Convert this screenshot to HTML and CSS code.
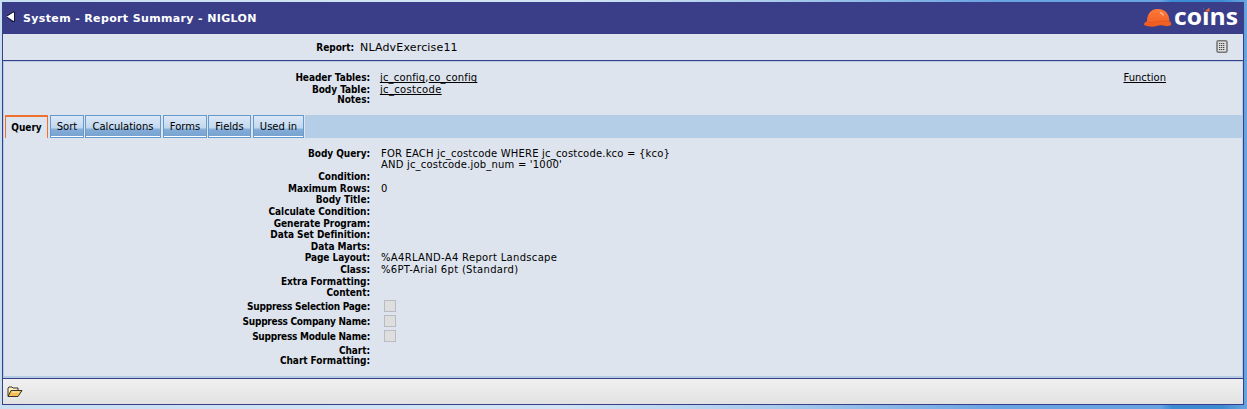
FILE: index.html
```html
<!DOCTYPE html>
<html lang="en">
<head>
<meta charset="utf-8">
<title>System - Report Summary - NIGLON</title>
<link rel="stylesheet" href="styles.css">
</head>
<body>
<div class="window">
  <header class="titlebar">
    <svg class="back" width="11" height="12" viewBox="0 0 11 12"><path d="M.5 5.500 8 1v9z" fill="#fff"/><path d="M1 5 7 1h1.500v9.500H6L1 6" fill="none" stroke="#151530"/></svg>
    <h1>System - Report Summary - NIGLON</h1>
    <svg class="logo" width="98" height="30" viewBox="0 0 98 30">
      <defs><linearGradient id="hat" x1="0" y1="0" x2="0" y2="1"><stop offset="0" stop-color="#ff7a3c"/><stop offset="1" stop-color="#ee5a1e"/></linearGradient></defs>
      <path d="M1 22c0-2 1-3 3-3.500C4 11 8 6 14 6c8-.5 12.500 5 12.500 12.500 1.500.5 2 1.500 1.500 3.500-2 1.500-5 1.500-8 .5-4-1-7 1-11 1.200C6 23.500 4 23 1 22z" fill="url(#hat)"/>
      <path d="M17 9.500c2 .5 3 1.500 3.500 3" fill="none" stroke="#ffb68c" stroke-width="1.600"/>
      <path d="M4 19.500c6 1 13-2.500 22-1" fill="none" stroke="#e2531a" stroke-width=".8"/>
      <text class="brand" x="31" y="22" textLength="64" lengthAdjust="spacingAndGlyphs">coins</text>
      <path d="M60.500 2h6.500v6.500h-6.500z" fill="#3a3e88"/><path d="M61.500 8.500 66.500 4.500v4z" fill="#f26a2d"/>
    </svg>
  </header>
  <section class="report">
    <span class="label">Report:</span><span class="report-name">NLAdvExercise11</span>
    <svg class="sheet" width="12" height="13" viewBox="0 0 12 13"><rect x="1" y=".8" width="10" height="11.400" rx="1.500" fill="#ddd" stroke="#777" stroke-width="1.600"/><path d="M3 3.500h6M3 5.500h6M3 7.500h6M3 9.500h6" stroke="#444" stroke-dasharray="1.300 .7"/></svg>
  </section>
  <main class="body">
    <div class="tables">
      <div class="row h12"><span class="label">Header Tables:</span><span class="value link"><a>jc_config</a>,<a>co_config</a></span></div>
      <div class="row h10"><span class="label">Body Table:</span><span class="value link wide"><a>jc_costcode</a></span></div>
      <div class="row h11"><span class="label">Notes:</span></div>
      <a class="function">Function</a>
    </div>
    <nav class="tabs">
      <span class="tab active">Query</span><span class="tab sort">Sort</span><span class="tab calc">Calculations</span><span class="tab forms">Forms</span><span class="tab fields">Fields</span><span class="tab used">Used in</span><span class="rest"></span>
    </nav>
    <div class="details">
      <div class="row query"><span class="label">Body Query:</span><span class="value">FOR EACH jc_costcode WHERE jc_costcode.kco = {kco}<br>AND jc_costcode.job_num = '1000'</span></div>
      <div class="row"><span class="label">Condition:</span></div>
      <div class="row"><span class="label">Maximum Rows:</span><span class="value">0</span></div>
      <div class="row"><span class="label">Body Title:</span></div>
      <div class="row"><span class="label">Calculate Condition:</span></div>
      <div class="row"><span class="label">Generate Program:</span></div>
      <div class="row"><span class="label">Data Set Definition:</span></div>
      <div class="row"><span class="label">Data Marts:</span></div>
      <div class="row"><span class="label">Page Layout:</span><span class="value wide">%A4RLAND-A4 Report Landscape</span></div>
      <div class="row"><span class="label">Class:</span><span class="value wide">%6PT-Arial 6pt (Standard)</span></div>
      <div class="row"><span class="label">Extra Formatting:</span></div>
      <div class="row"><span class="label">Content:</span></div>
      <div class="row check"><span class="label">Suppress Selection Page:</span><i class="box"></i></div>
      <div class="row check"><span class="label">Suppress Company Name:</span><i class="box"></i></div>
      <div class="row check"><span class="label">Suppress Module Name:</span><i class="box"></i></div>
      <div class="row h10"><span class="label">Chart:</span></div>
      <div class="row h10"><span class="label">Chart Formatting:</span></div>
    </div>
  </main>
  <footer class="footer">
    <svg width="16" height="12" viewBox="0 0 16 12"><path d="M1 10V2l1-1h3l1 1h5v2" fill="#fff0b8" stroke="#333"/><path d="M1 10.500 4 4.500h11L11 10.500z" fill="#f6bd51" stroke="#333"/><path d="M5 6h7" stroke="#fff0c0"/></svg>
  </footer>
</div>
</body>
</html>
```
FILE: styles.css
```css
* { box-sizing: border-box; }
body {
  margin: 0;
  height: 409px;
  padding: 2px 3px 4px 2px;
  overflow: hidden;
  background: linear-gradient(90deg, #c8dff2 0, #d3e5f5 45%, #a9cbec 62%, #69a3e2 80%, #69a3e2 93%, #3c8bd3 94%, #3c8bd3 98%, #69a5e0 100%);
  font: 10px/12px "DejaVu Sans", Verdana, sans-serif;
  color: #000;
}
.window { height: 403px; border: 1px solid #3a3e88; border-top: 0; background: #dde4ee; display: flex; flex-direction: column; }
.titlebar { height: 32px; flex: none; background: #3a3e88; display: flex; align-items: center; padding: 0 2px 0 3px; }
.back { margin-top: -2px; }
.titlebar h1 { margin: 1px auto 0 6px; font: bold 11px/15px "DejaVu Sans", Verdana, sans-serif; letter-spacing: .36px; color: #fff; white-space: nowrap; }
.logo { overflow: visible; }
.brand { font: bold 24px "Open Sans", sans-serif; fill: #fff; }
.report { height: 27px; flex: none; display: flex; align-items: center; border-bottom: 1px solid #3a3e88; padding-right: 15px; }
.report .label { width: 351px; margin-top: 2px; }
.report-name { font-size: 11px; letter-spacing: .17px; margin: 2px auto 0 6px; }
.sheet { margin-top: -1px; }
.body { flex: 1; border: 1px solid #b5cde4; border-width: 1px 1px 2px 1px; }
.tables { position: relative; height: 53px; padding-top: 10px; }
.row { display: flex; height: 11.65px; line-height: 12px; white-space: nowrap; }
.label { width: 366px; flex: none; text-align: right; font: bold 10px/12px "DejaVu Sans Condensed", "DejaVu Sans", Tahoma, sans-serif; letter-spacing: -.05px; }
.value { margin-left: 11px; line-height: 11.5px; letter-spacing: .19px; }
.link { margin-left: 10px; letter-spacing: .16px; }
.wide { letter-spacing: .32px; }
.h12 { height: 12px; }
.h11 { height: 11px; }
.h10 { height: 10px; }
.link a, .function { text-decoration: underline; text-underline-offset: 1px; text-decoration-skip-ink: none; }
.function { position: absolute; right: 76px; top: 10px; }
.tabs { display: flex; height: 23px; margin-left: 1px; }
.tab { flex: none; text-align: center; white-space: nowrap; height: 23px; line-height: 22px; border: 1px solid #6699cc; border-bottom-width: 1px; box-shadow: inset 0 -1px #fff; background: linear-gradient(#dce8f7, #c2d8ef 55%, #83acd7 65%, #76a2d0); margin-right: 1px; }
.active { width: 43px; border: 1px solid #f07030; border-top-width: 2px; border-bottom: 0; background: #dde4ee; box-shadow: none; font: bold 10px/22px "DejaVu Sans Condensed", sans-serif; margin-right: 2px; }
.sort { width: 34px; }
.calc { width: 76px; margin-right: 2px; }
.forms { width: 44px; }
.fields { width: 43px; margin-right: 2px; }
.used { width: 51px; margin-right: 1px; }
.rest { flex: 1; background: #b5cee8; }
.details { padding-top: 9px; }
.query { height: 24px; }
.query .label, .query .value { padding-top: 1px; }
.query .value { line-height: 11px; }
.check { height: 15.2px; line-height: 15px; }
.check .label { line-height: 15px; letter-spacing: -.25px; }
.box { width: 12px; height: 12px; margin: 1px 0 0 14px; border: 1px solid #b9bbc2; background: #dedede; }
.footer { height: 26px; flex: none; border-top: 1px solid #3a3e88; padding: 7px 0 0 4px; background: linear-gradient(#f0f0f0, #e2e2e2); }
```
